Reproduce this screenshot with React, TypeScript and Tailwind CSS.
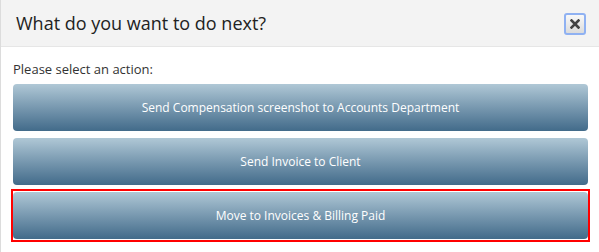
import React from "react";

const btn =
  "w-full h-[47px] rounded-[4px] bg-gradient-to-b from-[#b0c8d6] to-[#426b8a] text-white text-[12px] flex items-center justify-center";

export default function App() {
  return (
    <div
      className="w-[599px] h-[252px] bg-white border-l border-[#dcdcdc] flex flex-col overflow-hidden"
      style={{ fontFamily: '"Open Sans", "Noto Sans", sans-serif' }}
    >
      <div className="h-[47px] shrink-0 bg-[#f3f3f3] border-b border-[#e6e6e6] flex items-center justify-between pl-[15px] pr-[13px]">
        <div className="text-[18px] text-[#222] leading-none pb-[1px]">What do you want to do next?</div>
        <button className="w-[22px] h-[22px] rounded-[3px] border-2 border-[#8fb1f2] bg-gradient-to-b from-[#f8f8f8] to-[#dcdcdc] flex items-center justify-center mt-[1px]">
          <svg width="10" height="10" viewBox="0 0 10 10">
            <path d="M1.5 1.5 L8.5 8.5 M8.5 1.5 L1.5 8.5" stroke="#444" strokeWidth="2.6" strokeLinecap="square" />
          </svg>
        </button>
      </div>
      <div className="flex flex-col pl-[12px] pr-[11px] pt-[14px]">
        <div className="text-[13px] text-[#333] leading-[16px] mb-[7px]">Please select an action:</div>
        <div className="flex flex-col">
          <button className={btn}>Send Compensation screenshot to Accounts Department</button>
          <button className={btn + " mt-[7px]"}>Send Invoice to Client</button>
          <div className="mt-[4px] -mx-[2px] border-2 border-[#ff0000] py-[1px]">
            <button className={btn}>Move to Invoices &amp; Billing Paid</button>
          </div>
        </div>
      </div>
    </div>
  );
}
